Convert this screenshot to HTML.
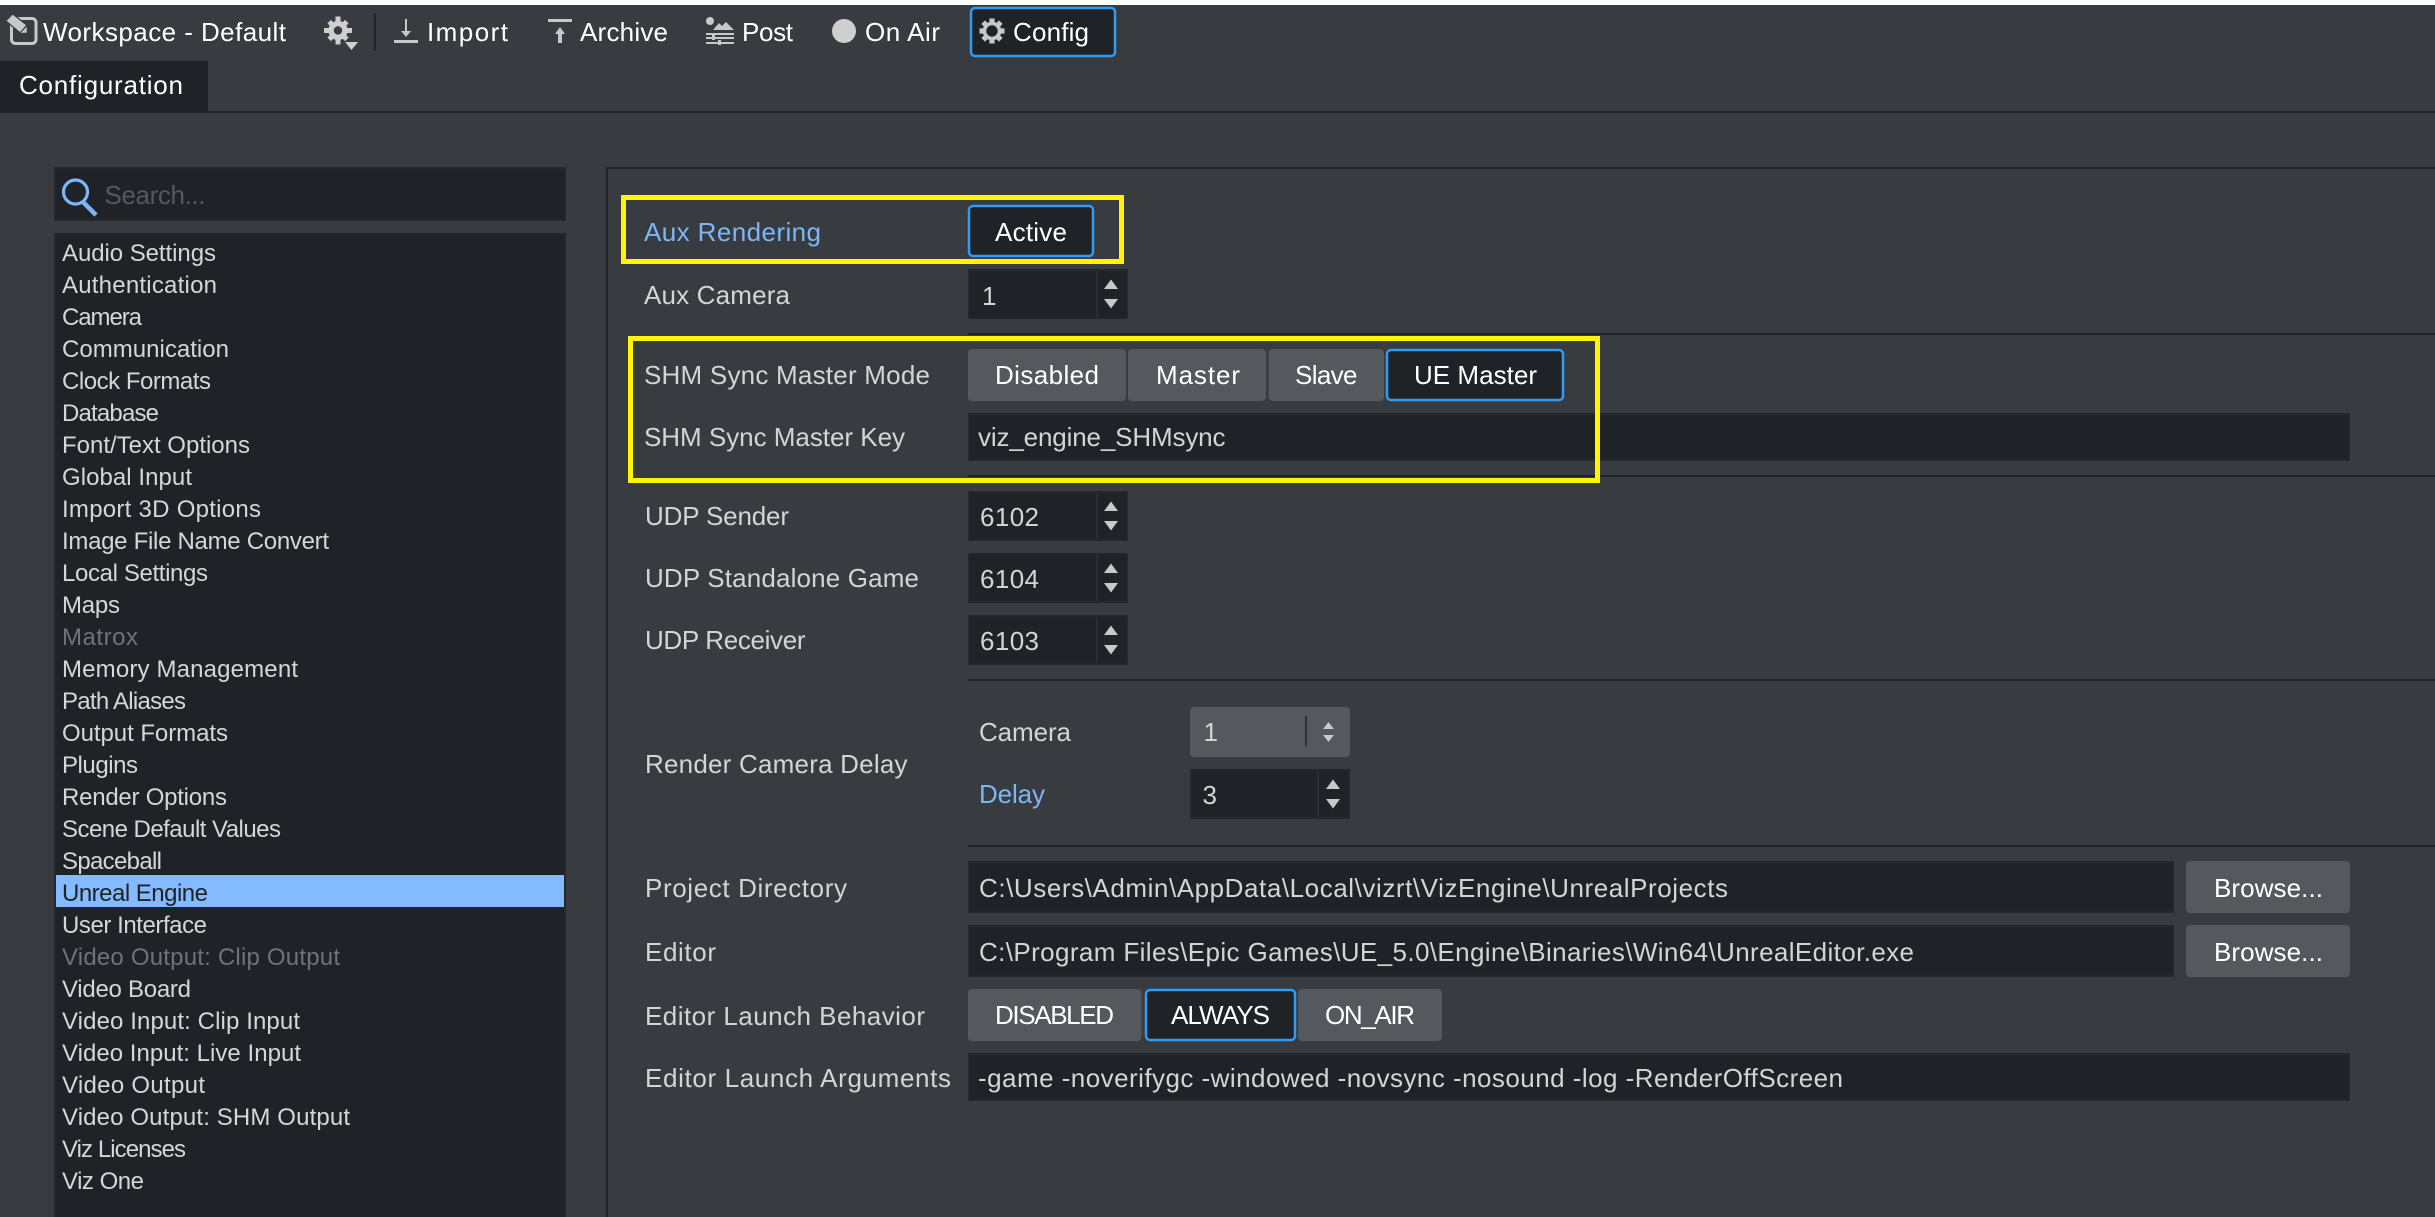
<!DOCTYPE html>
<html lang="en"><head><meta charset="utf-8"><title>Viz Engine Configuration</title>
<style>
html,body{margin:0;padding:0;background:#383b40;width:2435px;height:1217px;overflow:hidden}
svg{display:block;position:absolute;left:0;top:0}
text{font-family:"Liberation Sans",sans-serif;font-size:26px;fill:#d4d4d4;white-space:pre}
.w{fill:#fff}.b{fill:#7db6f7}
.l text{font-size:24px;fill:#d6d6d6}
.ic{fill:#c8c8c8}
.box{fill:#1f2227;stroke:#24272b;stroke-width:2}
.btn{fill:#55585c}
.on{fill:#1f2227;stroke:#2f9bf3;stroke-width:2.5}
.sep{fill:#1f2227}
.yl{fill:none;stroke:#fff500;stroke-width:5}
.div{fill:#2a2d31}
</style></head><body>
<svg width="2435" height="1217" viewBox="0 0 2435 1217" xmlns="http://www.w3.org/2000/svg">
<defs>
<g id="ud"><path class="ic" d="M0 -14.500 L7 -5 L-7 -5Z M0 14.500 L7 5 L-7 5Z"/></g>
<g id="spin"><rect class="box" x="1" y="1" width="158" height="48"/><rect class="div" x="128" y="2" width="2" height="46"/><use href="#ud" x="143" y="25"/></g>
<g id="gear"><circle r="7.500" fill="none" stroke="#c8c8c8" stroke-width="3.600"/>
<path class="ic" d="M-2.600 -12.500H2.600V-8H-2.600Z M-2.600 12.500H2.600V8H-2.600Z M-12.500 -2.600V2.600H-8V-2.600Z M12.500 -2.600V2.600H8V-2.600Z"/>
<path class="ic" transform="rotate(45)" d="M-2.600 -12.500H2.600V-8H-2.600Z M-2.600 12.500H2.600V8H-2.600Z M-12.500 -2.600V2.600H-8V-2.600Z M12.500 -2.600V2.600H8V-2.600Z"/></g>
<g id="gearb"><circle r="6.900" fill="none" stroke="#cfcfcf" stroke-width="5.400"/>
<path fill="#cfcfcf" d="M-2.500 -14H2.500V-8H-2.500Z M-2.500 14H2.500V8H-2.500Z M-14 -2.500V2.500H-8V-2.500Z M14 -2.500V2.500H8V-2.500Z"/>
<path fill="#cfcfcf" transform="rotate(45)" d="M-2.500 -12.500H2.500V-8H-2.500Z M-2.500 12.500H2.500V8H-2.500Z M-12.500 -2.500V2.500H-8V-2.500Z M12.500 -2.500V2.500H8V-2.500Z"/></g>
</defs>

<rect x="0" y="0" width="2435" height="5" fill="#fff"/>

<!-- toolbar -->
<rect x="11.500" y="18.500" width="24.500" height="25" rx="4" fill="none" stroke="#c8c8c8" stroke-width="3"/>
<path d="M6.700 20.700L12.700 14.700L26 25.300L20 32Z" fill="#c8c8c8" stroke="#383b40" stroke-width="2.500" paint-order="stroke"/>
<path d="M26.700 26.700V32.700H20.700Z" fill="#c8c8c8"/>
<text class="w" x="43" y="41" textLength="243">Workspace - Default</text>
<use href="#gearb" x="338" y="30.500"/>
<path fill="#cfcfcf" d="M345 42H358L351.500 50Z"/>
<rect class="sep" x="374" y="13" width="2" height="38"/>
<path class="ic" d="M405 19H407V31H411L406 37L401 31H405Z M394 40H418V43H394Z"/>
<text class="w" x="427" y="41" textLength="81">Import</text>
<path class="ic" d="M548 19H572V22H548Z M560 27L565 34H562V43H558V34H555Z"/>
<text class="w" x="580" y="41" textLength="88">Archive</text>
<circle class="ic" cx="710" cy="21" r="4"/>
<path class="ic" d="M713 30L719 23L722 26L726 22L734 30Z M706 33H734V35H706Z M706 37H734V39H706Z M706 42H734V44H706Z M712 35H715V40H712Z M718 40H721V45H718Z"/>
<text class="w" x="742" y="41" textLength="51">Post</text>
<circle cx="844" cy="31" r="12" fill="#cfcfcf"/>
<text class="w" x="865" y="41" textLength="75">On Air</text>
<rect class="on" x="971" y="8" width="144" height="48" rx="4"/>
<use href="#gear" x="992" y="31"/>
<text class="w" x="1013" y="41" textLength="76">Config</text>

<!-- tab -->
<rect x="0" y="61" width="208" height="50" fill="#1f2227"/>
<rect x="0" y="111" width="2435" height="2" fill="#1f2227"/>
<text class="w" x="19" y="94" textLength="164">Configuration</text>

<!-- search -->
<rect class="box" x="55" y="168" width="510" height="52"/>
<circle cx="75.500" cy="192" r="12" fill="none" stroke="#7db6f7" stroke-width="3.200"/>
<path d="M83 202L96 215" stroke="#7db6f7" stroke-width="4.500" fill="none"/>
<text x="104.500" y="204" textLength="101" style="fill:#55585c">Search...</text>

<!-- list -->
<rect class="box" x="55" y="234" width="510" height="990"/>
<rect x="56" y="875" width="508" height="32" fill="#84baff"/>
<g class="l">
<text x="62" y="261" textLength="154">Audio Settings</text>
<text x="62" y="293" textLength="155">Authentication</text>
<text x="62" y="325" textLength="80">Camera</text>
<text x="62" y="357" textLength="167">Communication</text>
<text x="62" y="389" textLength="149">Clock Formats</text>
<text x="62" y="421" textLength="97">Database</text>
<text x="62" y="453" textLength="188">Font/Text Options</text>
<text x="62" y="485" textLength="130">Global Input</text>
<text x="62" y="517" textLength="199">Import 3D Options</text>
<text x="62" y="549" textLength="267">Image File Name Convert</text>
<text x="62" y="581" textLength="146">Local Settings</text>
<text x="62" y="613" textLength="58">Maps</text>
<text x="62" y="645" textLength="76" style="fill:#6f7276">Matrox</text>
<text x="62" y="677" textLength="236">Memory Management</text>
<text x="62" y="709" textLength="124">Path Aliases</text>
<text x="62" y="741" textLength="166">Output Formats</text>
<text x="62" y="773" textLength="76">Plugins</text>
<text x="62" y="805" textLength="165">Render Options</text>
<text x="62" y="837" textLength="219">Scene Default Values</text>
<text x="62" y="869" textLength="100">Spaceball</text>
<text x="62" y="901" textLength="146" style="fill:#1f2227">Unreal Engine</text>
<text x="62" y="933" textLength="145">User Interface</text>
<text x="62" y="965" textLength="278" style="fill:#6f7276">Video Output: Clip Output</text>
<text x="62" y="997" textLength="129">Video Board</text>
<text x="62" y="1029" textLength="238">Video Input: Clip Input</text>
<text x="62" y="1061" textLength="239">Video Input: Live Input</text>
<text x="62" y="1093" textLength="143">Video Output</text>
<text x="62" y="1125" textLength="288">Video Output: SHM Output</text>
<text x="62" y="1157" textLength="124">Viz Licenses</text>
<text x="62" y="1189" textLength="82">Viz One</text>
</g>

<!-- right panel frame -->
<rect class="sep" x="607" y="167" width="1828" height="2"/>
<rect class="sep" x="606" y="167" width="2" height="1050"/>

<!-- separators -->
<rect class="sep" x="968" y="333" width="1467" height="2"/>
<rect class="sep" x="968" y="475" width="1467" height="2"/>
<rect class="sep" x="968" y="679" width="1467" height="2"/>
<rect class="sep" x="968" y="845" width="1467" height="2"/>

<!-- aux rendering -->
<text class="b" x="644" y="241" textLength="177">Aux Rendering</text>
<rect class="on" x="969" y="206" width="124" height="50" rx="4"/>
<text class="w" x="995" y="241" textLength="72">Active</text>

<text x="644" y="304" textLength="146">Aux Camera</text>
<use href="#spin" x="968" y="269"/>
<text x="982" y="305">1</text>

<!-- SHM -->
<text x="644" y="384" textLength="286">SHM Sync Master Mode</text>
<rect class="btn" x="968" y="349" width="158" height="52" rx="4"/>
<rect class="btn" x="1128" y="349" width="138" height="52" rx="4"/>
<rect class="btn" x="1268.500" y="349" width="115.500" height="52" rx="4"/>
<rect class="on" x="1387" y="350" width="176" height="50" rx="4"/>
<text class="w" x="995" y="384" textLength="104">Disabled</text>
<text class="w" x="1156" y="384" textLength="84">Master</text>
<text class="w" x="1295" y="384" textLength="62.500">Slave</text>
<text class="w" x="1414" y="384" textLength="123">UE Master</text>

<text x="644" y="446" textLength="261">SHM Sync Master Key</text>
<rect class="box" x="969" y="414" width="1380" height="46"/>
<text x="978" y="446" textLength="247.500">viz_engine_SHMsync</text>

<!-- UDP -->
<text x="645" y="525" textLength="144">UDP Sender</text>
<use href="#spin" x="968" y="491"/>
<text x="980" y="526" textLength="59">6102</text>
<text x="645" y="587" textLength="274">UDP Standalone Game</text>
<use href="#spin" x="968" y="553"/>
<text x="980" y="588" textLength="59">6104</text>
<text x="645" y="649" textLength="160.500">UDP Receiver</text>
<use href="#spin" x="968" y="615"/>
<text x="980" y="650" textLength="59">6103</text>

<!-- render camera delay -->
<text x="645" y="773" textLength="262.500">Render Camera Delay</text>
<text x="979" y="741" textLength="92">Camera</text>
<rect class="btn" x="1190" y="707" width="160" height="50" rx="4"/>
<text x="1203.500" y="741">1</text>
<rect x="1305" y="716" width="2" height="30" fill="#2e3135"/>
<path class="ic" d="M1328.500 722L1334 729H1323Z M1328.500 742L1334 735H1323Z"/>
<text class="b" x="979" y="803" textLength="66">Delay</text>
<g transform="translate(1190 769)"><rect class="box" x="1" y="1" width="158" height="48"/><rect class="div" x="127" y="2" width="2" height="46"/><use href="#ud" x="143" y="25"/></g>
<text x="1202.500" y="804">3</text>

<!-- project -->
<text x="645" y="897" textLength="202">Project Directory</text>
<rect class="box" x="969" y="862" width="1204" height="50"/>
<text x="979" y="897" textLength="749">C:\Users\Admin\AppData\Local\vizrt\VizEngine\UnrealProjects</text>
<rect class="btn" x="2186" y="861" width="164" height="52" rx="4"/>
<text class="w" x="2214" y="897" textLength="109">Browse...</text>

<text x="645" y="961" textLength="71">Editor</text>
<rect class="box" x="969" y="926" width="1204" height="50"/>
<text x="979" y="961" textLength="935">C:\Program Files\Epic Games\UE_5.0\Engine\Binaries\Win64\UnrealEditor.exe</text>
<rect class="btn" x="2186" y="925" width="164" height="52" rx="4"/>
<text class="w" x="2214" y="961" textLength="109">Browse...</text>

<text x="645" y="1025" textLength="280">Editor Launch Behavior</text>
<rect class="btn" x="968" y="989" width="173.500" height="52" rx="4"/>
<rect class="on" x="1146" y="990" width="149" height="50" rx="4"/>
<rect class="btn" x="1298" y="989" width="144" height="52" rx="4"/>
<text class="w" x="995" y="1024" textLength="119">DISABLED</text>
<text class="w" x="1171" y="1024" textLength="99">ALWAYS</text>
<text class="w" x="1325" y="1024" textLength="90">ON_AIR</text>

<text x="645" y="1087" textLength="306">Editor Launch Arguments</text>
<rect class="box" x="969" y="1054" width="1380" height="46"/>
<text x="978" y="1087" textLength="865">-game -noverifygc -windowed -novsync -nosound -log -RenderOffScreen</text>

<!-- yellow highlights -->
<rect class="yl" x="623.500" y="197.500" width="498" height="64"/>
<rect class="yl" x="630.500" y="338.500" width="967" height="142"/>
</svg>
</body></html>
